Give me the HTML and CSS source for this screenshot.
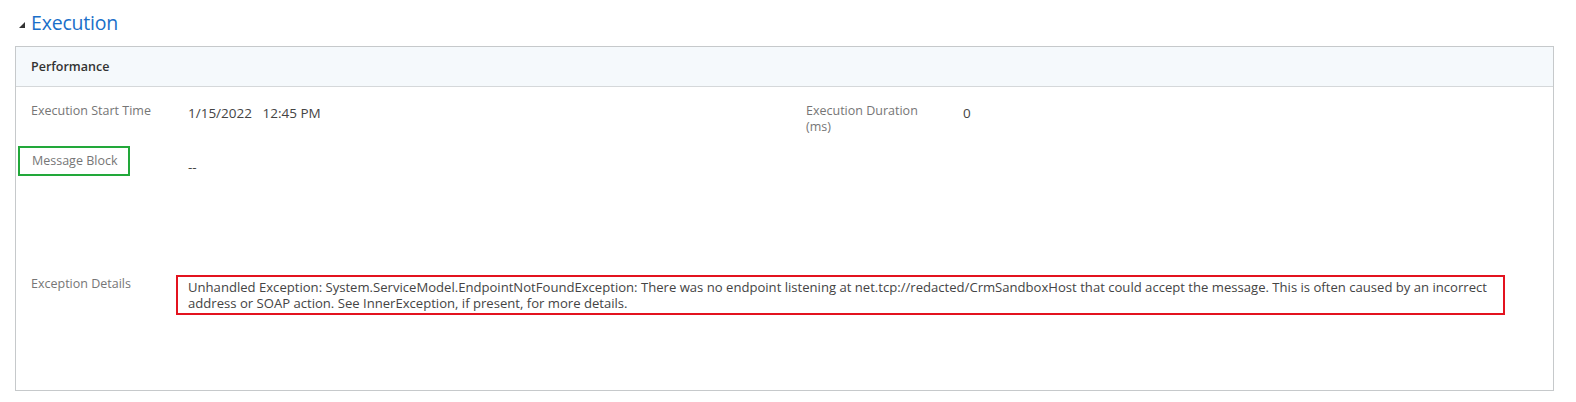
FILE: index.html
```html
<!DOCTYPE html>
<html>
<head>
<meta charset="utf-8">
<link rel="stylesheet" href="styles.css">
</head>
<body>
<div class="page">
  <div class="section-title">
    <span class="caret"></span>
    <h2 class="title">Execution</h2>
  </div>
  <div class="panel">
    <div class="panel-header">Performance</div>
    <div class="panel-body">
      <div class="row row-first">
        <div class="field">
          <div class="label">Execution Start Time</div>
          <div class="value">1/15/2022&nbsp;&nbsp; 12:45 PM</div>
        </div>
        <div class="field field-right">
          <div class="label label-narrow">Execution Duration (ms)</div>
          <div class="value">0</div>
        </div>
      </div>
      <div class="row row-message">
        <div class="field">
          <div class="label"><span class="green-box">Message Block</span></div>
          <div class="value value-dash">--</div>
        </div>
      </div>
      <div class="row row-exception">
        <div class="field field-wide">
          <div class="label label-exception">Exception Details</div>
          <div class="value value-exception"><div class="red-box">Unhandled Exception: System.ServiceModel.EndpointNotFoundException: There was no endpoint listening at net.tcp://redacted/CrmSandboxHost that could accept the message. This is often caused by an incorrect address or SOAP action. See InnerException, if present, for more details.</div></div>
        </div>
      </div>
    </div>
  </div>
</div>
</body>
</html>
```

FILE: styles.css
```css
* { box-sizing: border-box; }
html, body { margin: 0; padding: 0; background: #ffffff; }
body {
  font-family: "Open Sans", "Noto Sans", "Liberation Sans", sans-serif;
  color: #444444;
}
.page { padding: 8px 14px 0 15px; width: 1568px; }
.section-title {
  display: flex;
  align-items: center;
  height: 28px;
  padding-left: 4px;
}
.caret {
  width: 0; height: 0;
  border-left: 6px solid transparent;
  border-bottom: 6px solid #333333;
  margin-right: 6px;
  margin-top: 6px;
}
.title {
  margin: 0;
  font-weight: 400;
  font-size: 19.5px;
  color: #1a6fc9;
  letter-spacing: -0.2px;
}
.panel {
  margin-top: 10px;
  border: 1px solid #c6c9cb;
  height: 345px;
}
.panel-header {
  height: 40px;
  background: #f5f9fc;
  border-bottom: 1px solid #d5d8da;
  padding-left: 15px;
  display: flex;
  align-items: center;
  font-size: 12.5px;
  font-weight: 600;
  color: #333333;
}
.panel-body { padding: 16px 0 0 15px; }
.row { display: flex; }
.row-first { height: 50px; }
.row-message { height: 129px; }
.field { display: flex; width: 775px; }
.field-wide { width: 1500px; }
.field-right { width: 700px; }
.label {
  width: 157px;
  flex: none;
  font-size: 12.5px;
  color: #767676;
  line-height: 16px;
}
.label-exception { margin-top: -6px; }
.label-narrow { padding-right: 30px; }
.value {
  font-size: 13.5px;
  color: #444444;
  line-height: 18px;
  padding-top: 1px;
}
.value-dash { padding-top: 5px; }
.green-box {
  display: inline-block;
  margin-left: -13px;
  margin-top: -7px;
  padding: 5px 11px 5px 12px;
  border: 2px solid #22a83a;
}
.value-exception { margin-left: -12px; margin-top: -8px; }
.red-box {
  width: 1329px;
  border: 2px solid #e3131f;
  padding: 2px 2px 2px 10px;
  line-height: 16px;
  font-size: 13.1px;
}
```
